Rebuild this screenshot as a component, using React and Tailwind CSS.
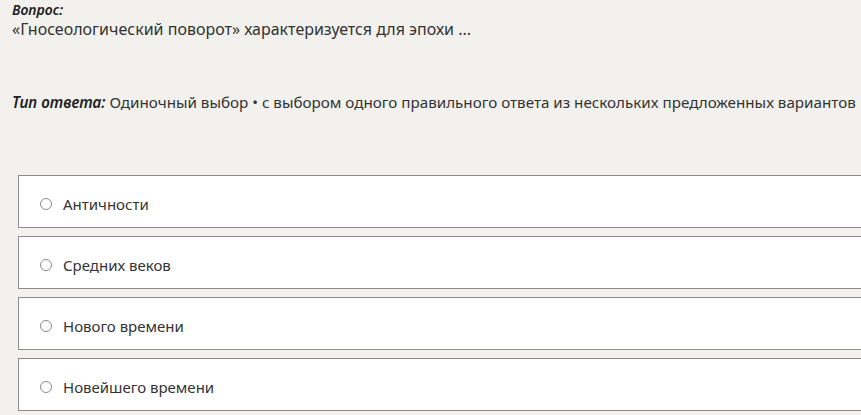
const options = ['Античности', 'Средних веков', 'Нового времени', 'Новейшего времени']

export default function App() {
  return (
    <div
      className="h-[415px] w-[861px] overflow-hidden bg-[#f2f1ee] text-[#333] pl-3 pt-[1px]"
      style={{ fontFamily: '"Noto Sans", "Open Sans", sans-serif' }}
    >
      <div className="text-[14px] leading-[18px] font-semibold italic text-[#222]">Вопрос:</div>
      <div className="text-[16px] leading-[20px]">
        «Гносеологический поворот» характеризуется для эпохи ...
      </div>
      <div className="mt-[53px] whitespace-nowrap text-[15.2px] leading-[20px]">
        <span className="font-semibold italic text-[#222]">Тип ответа:</span> Одиночный выбор • с
        выбором одного правильного ответа из нескольких предложенных вариантов
      </div>
      <div className="ml-[6px] mt-[63px] flex w-[900px] flex-col gap-[8px]">
        {options.map((o) => (
          <label
            key={o}
            className="flex h-[53px] items-center gap-[11px] border border-[#8c8c8c] bg-white pl-[21px] pt-[5px] text-[15px]"
          >
            <span className="h-[12px] w-[12px] rounded-full border border-[#8a8a8a]" />
            <span>{o}</span>
          </label>
        ))}
      </div>
    </div>
  )
}
